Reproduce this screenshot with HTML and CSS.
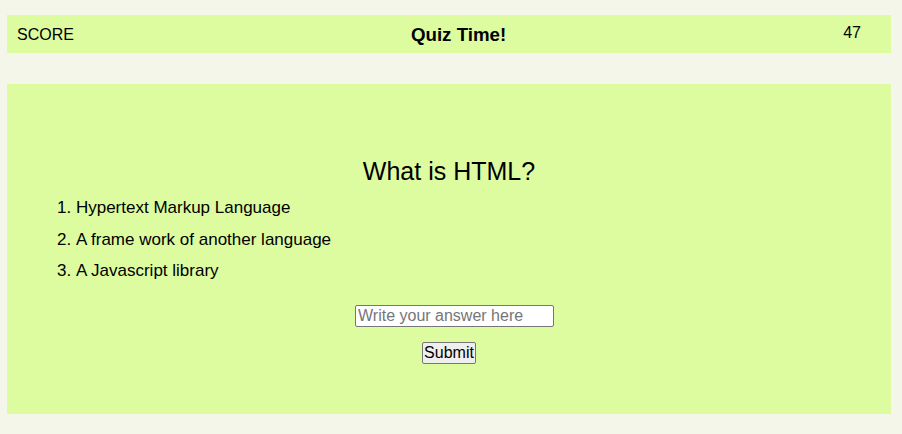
FILE: index.html
```html
<!DOCTYPE html>
<html lang="en">
<head>
<meta charset="utf-8">
<title>Quiz Time!</title>
<link rel="stylesheet" href="styles.css">
</head>
<body>
  <header class="topbar">
    <span class="score-label">SCORE</span>
    <h3 class="title">Quiz Time!</h3>
    <span class="score-value">47</span>
  </header>
  <main class="panel">
    <h2 class="question">What is HTML?</h2>
    <ol class="options">
      <li>Hypertext Markup Language</li>
      <li>A frame work of another language</li>
      <li>A Javascript library</li>
    </ol>
    <form class="answer-form">
      <div class="input-row"><input class="answer" type="text" placeholder="Write your answer here"></div>
      <button class="submit" type="button">Submit</button>
    </form>
  </main>
</body>
</html>
```
FILE: styles.css
```css
html, body {
  margin: 0;
  padding: 0;
}
body {
  background: #f5f6ea;
  font-family: "Liberation Sans", Arial, sans-serif;
  color: #000;
  padding: 15px 11px 0 7px;
}
.topbar {
  background: #ddfca0;
  height: 38px;
  display: flex;
  align-items: center;
  justify-content: space-between;
  padding: 1px 30px 0 10px;
  box-sizing: border-box;
  font-size: 16px;
}
.title {
  margin: 0;
  font-size: 18.72px;
  font-weight: bold;
}
.score-value {
  margin-bottom: 4px;
}
.panel {
  background: #ddfca0;
  margin-top: 31px;
  padding: 73px 0 50px 0;
}
.question {
  margin: 0;
  text-align: center;
  font-size: 25px;
  font-weight: normal;
  line-height: 29px;
}
.options {
  list-style-position: inside;
  margin: 12px 0 0 0;
  padding: 0 0 0 50px;
  font-size: 17px;
}
.options li {
  line-height: 19px;
  margin-bottom: 12.5px;
}
.options li:last-child {
  margin-bottom: 0;
}
.answer-form {
  margin-top: 25px;
  display: flex;
  flex-direction: column;
  align-items: center;
}
.input-row {
  padding-left: 11px;
}
.answer {
  display: block;
  width: 199px;
  height: 22px;
  box-sizing: border-box;
  border: 1px solid #767676;
  border-radius: 2px;
  padding: 0 2px;
  font-family: "Liberation Sans", Arial, sans-serif;
  font-size: 16px;
  background: #fff;
  outline: none;
}
.answer::placeholder {
  color: #767676;
}
.submit {
  margin-top: 15px;
  height: 22px;
  box-sizing: border-box;
  padding: 0 1px;
  border: 1px solid #767676;
  border-radius: 2px;
  background: #efefef;
  font-family: "Liberation Sans", Arial, sans-serif;
  font-size: 16px;
  color: #000;
  line-height: 18px;
}
```
